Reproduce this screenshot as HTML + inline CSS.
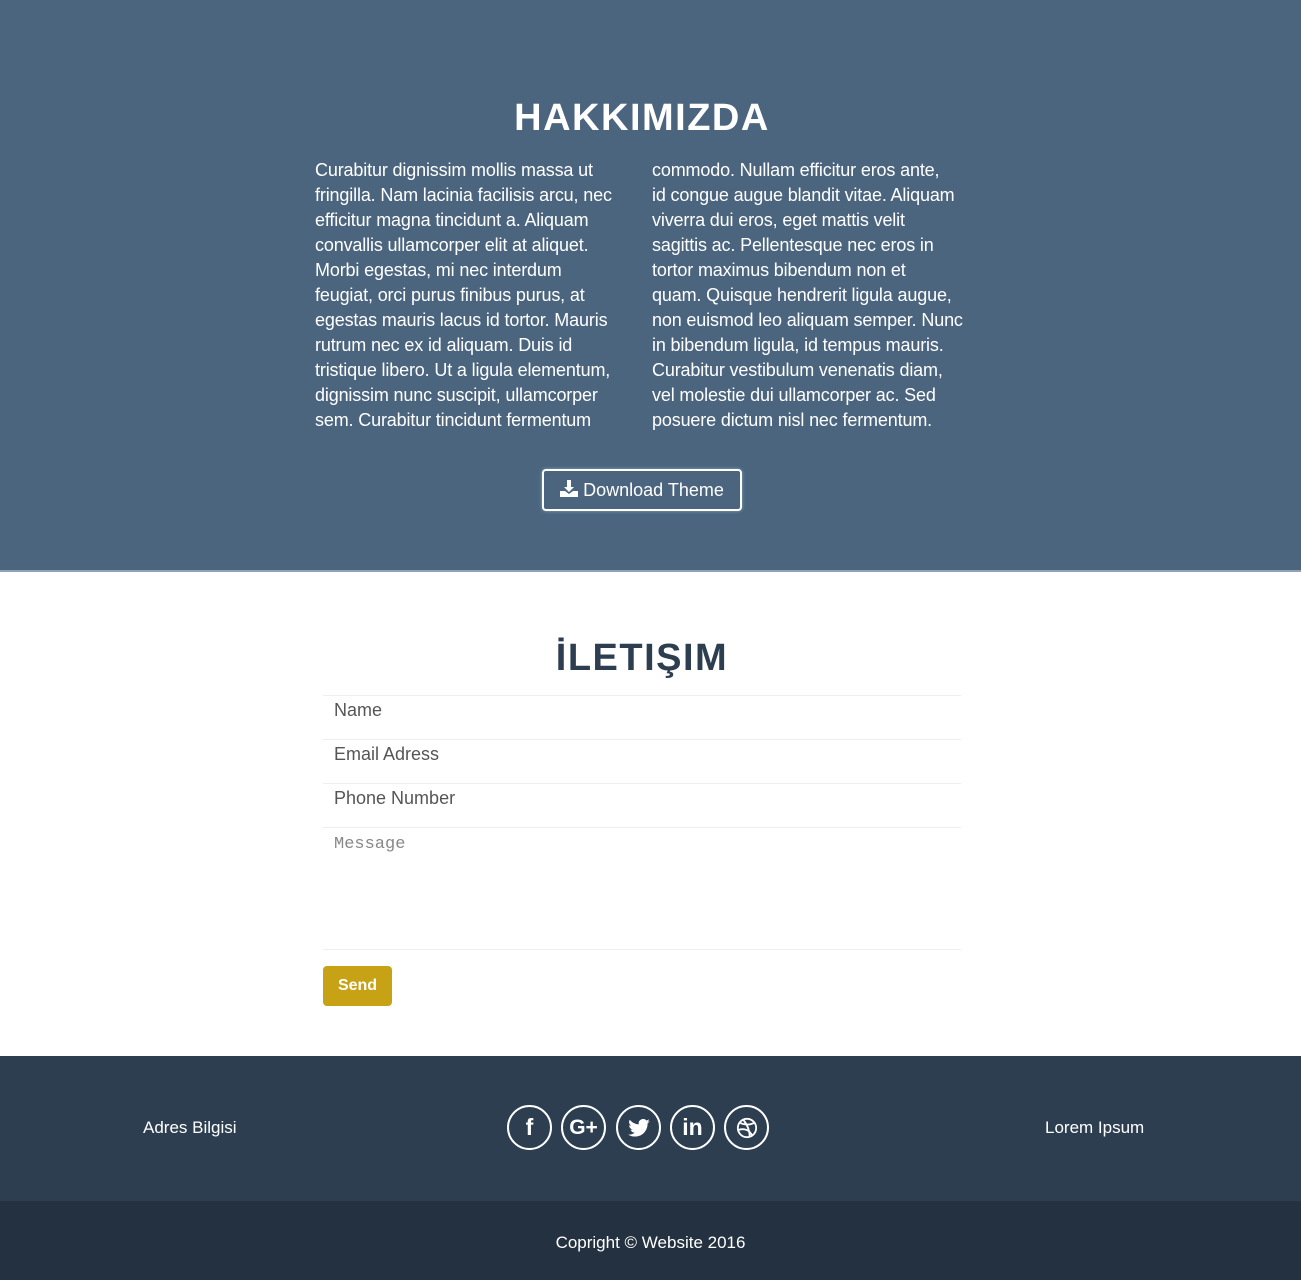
<!DOCTYPE html>
<html><head><meta charset="utf-8"><style>
*{box-sizing:border-box;margin:0;padding:0}
body{width:1301px;height:1280px;font-family:"Liberation Sans",sans-serif;background:#fff;overflow:hidden}
.about{background:#4b657f;height:572px;border-bottom:2px solid #8ea3bb;position:relative;color:#fff}
h2{font-family:"Liberation Sans",sans-serif;font-weight:700;font-size:38px;text-align:center;letter-spacing:1.5px}
.about h2{position:absolute;top:97px;left:0;width:1284px}
.cols{position:absolute;top:158px;left:315px;width:700px;font-size:18px;line-height:25px;letter-spacing:-0.15px;white-space:nowrap}
.cols p{position:absolute;top:0}
.btn{position:absolute;top:469px;left:542px;width:200px;height:42px;border:2px solid #fff;border-radius:4px;font-size:18px;line-height:38px;text-align:center;box-shadow:0 0 3px #8ab}
.contact h2{position:absolute;top:637px;left:0;width:1284px;color:#2c3e50}
.f{position:absolute;left:323px;width:638px;border-top:1px solid #eee;color:#555;font-size:18px;padding-left:11px}
.send{position:absolute;left:323px;top:966px;width:69px;height:40px;background:#c7a214;border-radius:4px;color:#fff;font-weight:700;font-size:16px;line-height:40px;text-align:center}
.foot{position:absolute;top:1056px;left:0;width:1301px;height:145px;background:#2c3e50;color:#fff;font-size:17px}
.copy{position:absolute;top:1201px;left:0;width:1301px;height:79px;background:#233140;color:#fff;font-size:17px;text-align:center;line-height:84px}
.ic{position:absolute;top:49px;width:45px;height:45px;border:2px solid #fff;border-radius:50%;display:flex;align-items:center;justify-content:center;font-weight:700;font-size:23px}
</style></head><body>
<div class="about">
<h2>HAKKIMIZDA</h2>
<div class="cols"><p style="left:0">Curabitur dignissim mollis massa ut<br>fringilla. Nam lacinia facilisis arcu, nec<br>efficitur magna tincidunt a. Aliquam<br>convallis ullamcorper elit at aliquet.<br>Morbi egestas, mi nec interdum<br>feugiat, orci purus finibus purus, at<br>egestas mauris lacus id tortor. Mauris<br>rutrum nec ex id aliquam. Duis id<br>tristique libero. Ut a ligula elementum,<br>dignissim nunc suscipit, ullamcorper<br>sem. Curabitur tincidunt fermentum</p><p style="left:337px">commodo. Nullam efficitur eros ante,<br>id congue augue blandit vitae. Aliquam<br>viverra dui eros, eget mattis velit<br>sagittis ac. Pellentesque nec eros in<br>tortor maximus bibendum non et<br>quam. Quisque hendrerit ligula augue,<br>non euismod leo aliquam semper. Nunc<br>in bibendum ligula, id tempus mauris.<br>Curabitur vestibulum venenatis diam,<br>vel molestie dui ullamcorper ac. Sed<br>posuere dictum nisl nec fermentum.</p></div>
<div class="btn"><svg width="18" height="17" viewBox="0 0 18 17" style="vertical-align:-1px"><path d="M7 0h4v7h3l-5 5-5-5h3z M0 11h5l4 3 4-3h5v6H0z" fill="#fff"/></svg> Download Theme</div>
</div>
<div class="contact">
<h2>İLETIŞIM</h2>
<div class="f" style="top:695px;height:44px;line-height:28px">Name</div>
<div class="f" style="top:739px;height:44px;line-height:28px">Email Adress</div>
<div class="f" style="top:783px;height:44px;line-height:28px">Phone Number</div>
<div class="f" style="top:827px;height:123px;font-family:'Liberation Mono',monospace;font-size:17px;line-height:34px;color:#888;border-bottom:1px solid #eee">Message</div>
<div class="send">Send</div>
</div>
<div class="foot">
<div style="position:absolute;left:143px;top:62px">Adres Bilgisi</div>
<div class="ic" style="left:507px">f</div>
<div class="ic" style="left:561px;font-size:21px">G+</div>
<div class="ic" style="left:616px"><svg width="22" height="18" viewBox="0 0 24 20"><path d="M24 2.4a10 10 0 0 1-2.8.8A5 5 0 0 0 23.3.4a10 10 0 0 1-3.1 1.2A4.9 4.9 0 0 0 11.8 6 14 14 0 0 1 1.7.9a4.9 4.9 0 0 0 1.5 6.6A4.9 4.9 0 0 1 1 6.9a4.9 4.9 0 0 0 3.9 4.8 4.9 4.9 0 0 1-2.2.1 4.9 4.9 0 0 0 4.6 3.4A9.9 9.9 0 0 1 0 17.3 14 14 0 0 0 7.5 19.5c9 0 14-7.5 14-14v-.6A10 10 0 0 0 24 2.4z" fill="#fff"/></svg></div>
<div class="ic" style="left:670px">in</div>
<div class="ic" style="left:724px"><svg width="22" height="22" viewBox="0 0 24 24" fill="none" stroke="#fff" stroke-width="2"><circle cx="12" cy="12" r="10"/><path d="M4 6c5 3 12 3 16 0M3 14c6-2 12 0 15 7M8 3c4 5 7 12 7 19"/></svg></div>
<div style="position:absolute;left:1045px;top:62px">Lorem Ipsum</div>
</div>
<div class="copy">Copright © Website 2016</div>
</body></html>
